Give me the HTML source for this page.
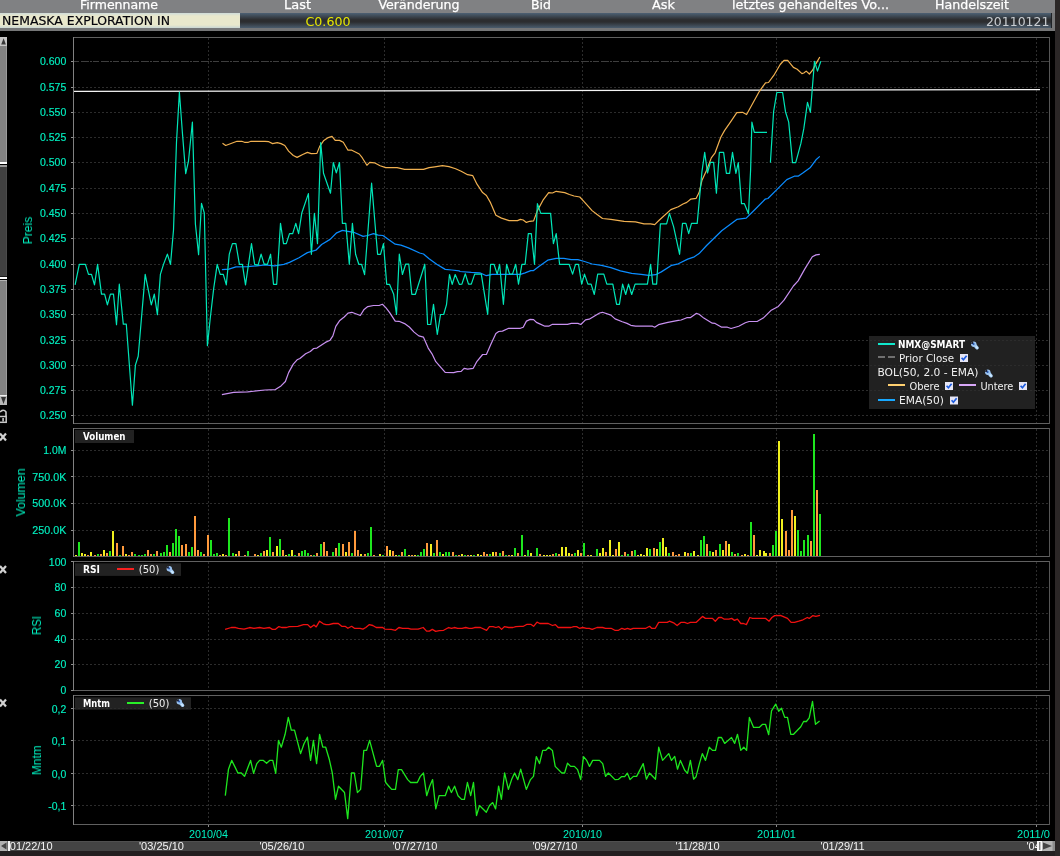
<!DOCTYPE html>
<html><head><meta charset="utf-8"><title>NEMASKA EXPLORATION IN</title>
<style>html,body{margin:0;padding:0;background:#000;overflow:hidden}svg{display:block}text{white-space:pre}</style></head><body>
<svg width="1060" height="856" viewBox="0 0 1060 856">
<defs>
<filter id="gs" x="-5%" y="-20%" width="110%" height="140%" color-interpolation-filters="sRGB"><feColorMatrix type="saturate" values="1"/></filter>
<linearGradient id="gname" x1="0" y1="0" x2="0" y2="1"><stop offset="0" stop-color="#cfdcda"/><stop offset="0.2" stop-color="#e9e8cc"/><stop offset="0.8" stop-color="#e9e8cc"/><stop offset="1" stop-color="#c9d6d4"/></linearGradient>
<linearGradient id="gdark" x1="0" y1="0" x2="0" y2="1"><stop offset="0" stop-color="#4d6174"/><stop offset="0.45" stop-color="#2c2d2f"/><stop offset="0.6" stop-color="#2c2d2f"/><stop offset="1" stop-color="#4a5c6d"/></linearGradient>
<clipPath id="cpP"><rect x="74" y="38" width="975" height="385"/></clipPath>
<clipPath id="cpAll"><rect x="0" y="0" width="1050" height="856"/></clipPath>
<clipPath id="cpHead"><rect x="0" y="0" width="1055" height="13"/></clipPath>
<g id="chk"><rect x="0" y="0" width="8" height="8" fill="#e6e6f6"/><path d="M1.6,3.8 L3.4,5.8 L6.6,1.8" fill="none" stroke="#1c5ce0" stroke-width="1.7"/></g>
<g id="wr"><path d="M4.2,4.2 L6.6,6.8" stroke="#a8d0f8" stroke-width="3.4" stroke-linecap="round" fill="none"/><circle cx="3.3" cy="3.3" r="2.7" fill="#9cc4f0"/><path d="M3.4,3.4 L0.2,2.6 L2.4,0.2 Z" fill="#1c1c2c"/><circle cx="3.1" cy="3.1" r="1.0" fill="#2858b0"/><path d="M5.6,5.8 L7,7.2" stroke="#d8f0ff" stroke-width="1.2" stroke-linecap="round"/></g>
<g id="xx"><path d="M0,1 L6,8 M6,1 L0,8" stroke="#d0d0d0" stroke-width="2.2" fill="none"/></g>
</defs>
<rect x="0" y="0" width="1060" height="856" fill="#000" />
<rect x="0" y="0" width="1055" height="13" fill="#808183" />
<g clip-path="url(#cpHead)">
<text x="80" y="8.9" font-size="12.4" fill="#ffffff" text-anchor="start" font-family="&quot;DejaVu Sans&quot;, &quot;Liberation Sans&quot;, sans-serif" font-weight="normal" textLength="78" lengthAdjust="spacingAndGlyphs" stroke="#fff" stroke-width="0.25" filter="url(#gs)">Firmenname</text>
<text x="284" y="8.9" font-size="12.4" fill="#ffffff" text-anchor="start" font-family="&quot;DejaVu Sans&quot;, &quot;Liberation Sans&quot;, sans-serif" font-weight="normal" textLength="27" lengthAdjust="spacingAndGlyphs" stroke="#fff" stroke-width="0.25" filter="url(#gs)">Last</text>
<text x="378.5" y="8.9" font-size="12.4" fill="#ffffff" text-anchor="start" font-family="&quot;DejaVu Sans&quot;, &quot;Liberation Sans&quot;, sans-serif" font-weight="normal" textLength="81" lengthAdjust="spacingAndGlyphs" stroke="#fff" stroke-width="0.25" filter="url(#gs)">Veränderung</text>
<text x="531" y="8.9" font-size="12.4" fill="#ffffff" text-anchor="start" font-family="&quot;DejaVu Sans&quot;, &quot;Liberation Sans&quot;, sans-serif" font-weight="normal" textLength="20" lengthAdjust="spacingAndGlyphs" stroke="#fff" stroke-width="0.25" filter="url(#gs)">Bid</text>
<text x="652" y="8.9" font-size="12.4" fill="#ffffff" text-anchor="start" font-family="&quot;DejaVu Sans&quot;, &quot;Liberation Sans&quot;, sans-serif" font-weight="normal" textLength="23" lengthAdjust="spacingAndGlyphs" stroke="#fff" stroke-width="0.25" filter="url(#gs)">Ask</text>
<text x="732" y="8.9" font-size="12.4" fill="#ffffff" text-anchor="start" font-family="&quot;DejaVu Sans&quot;, &quot;Liberation Sans&quot;, sans-serif" font-weight="normal" textLength="157" lengthAdjust="spacingAndGlyphs" stroke="#fff" stroke-width="0.25" filter="url(#gs)">letztes gehandeltes Vo...</text>
<text x="935" y="8.9" font-size="12.4" fill="#ffffff" text-anchor="start" font-family="&quot;DejaVu Sans&quot;, &quot;Liberation Sans&quot;, sans-serif" font-weight="normal" textLength="74" lengthAdjust="spacingAndGlyphs" stroke="#fff" stroke-width="0.25" filter="url(#gs)">Handelszeit</text>
</g>
<rect x="0" y="13" width="1055" height="18" fill="#777879" />
<rect x="0" y="13" width="240" height="15" fill="url(#gname)" />
<rect x="240" y="13" width="811" height="15" fill="url(#gdark)" />
<rect x="1051" y="13" width="1" height="15" fill="#1e2226" />
<text x="2" y="24.6" font-size="12.4" fill="#05050c" text-anchor="start" font-family="&quot;DejaVu Sans&quot;, &quot;Liberation Sans&quot;, sans-serif" font-weight="normal" textLength="168" lengthAdjust="spacingAndGlyphs" stroke="#05050c" stroke-width="0.2" filter="url(#gs)">NEMASKA EXPLORATION IN</text>
<text x="305.5" y="25.5" font-size="12.4" fill="#e6e600" text-anchor="start" font-family="&quot;DejaVu Sans&quot;, &quot;Liberation Sans&quot;, sans-serif" font-weight="normal" textLength="45" lengthAdjust="spacingAndGlyphs"  filter="url(#gs)">C0.600</text>
<text x="1049.4" y="25.6" font-size="12.4" fill="#c8ccd0" text-anchor="end" font-family="&quot;DejaVu Sans&quot;, &quot;Liberation Sans&quot;, sans-serif" font-weight="normal" textLength="63.5" lengthAdjust="spacingAndGlyphs"  filter="url(#gs)">20110121</text>
<rect x="0" y="28" width="1055" height="3" fill="#757677" />
<rect x="1055" y="0" width="5" height="856" fill="#2b2727" />
<rect x="0" y="37" width="7" height="368" fill="#828282" />
<rect x="6" y="37" width="1" height="368" fill="#9a9a9a" />
<rect x="0" y="37" width="7" height="9" fill="#c6c6c6" />
<path d="M1.2,44.6 L3.6,38.2 L5.9,44.6 Z" fill="#383838"/>
<rect x="0" y="162" width="7" height="2" fill="#ffffff" />
<rect x="0" y="164" width="7" height="1" fill="#000" />
<rect x="0" y="165" width="7" height="2" fill="#9a9a9a" />
<rect x="0" y="167" width="7" height="109" fill="#404040" />
<rect x="6" y="167" width="1" height="109" fill="#4a4a4a" />
<rect x="0" y="276" width="7" height="1" fill="#1a1a1a" />
<rect x="0" y="277" width="7" height="2" fill="#ffffff" />
<rect x="0" y="279" width="7" height="1" fill="#000" />
<rect x="0" y="280" width="7" height="1" fill="#b4b4b4" />
<rect x="0" y="395" width="7" height="1" fill="#f0f0f0" />
<rect x="0" y="396" width="7" height="9" fill="#b8b8b8" />
<path d="M1,397 L6,397 L3.5,404 Z" fill="#333"/>
<path d="M0,412 Q3.5,408.5 6,412 L6,416" fill="none" stroke="#c8c8c8" stroke-width="1.6"/>
<rect x="-1" y="416.5" width="7.2" height="5.8" fill="none" stroke="#c8c8c8" stroke-width="1.5"/>
<rect x="2.3" y="418" width="1.6" height="3.5" fill="#c8c8c8" />
<use href="#xx" x="0" y="432.5"/>
<use href="#xx" x="0" y="565"/>
<use href="#xx" x="0" y="698.5"/>
<rect x="75" y="430" width="59" height="13" fill="#222" />
<rect x="75" y="563.3" width="106" height="12.6" fill="#222" />
<rect x="75" y="697.3" width="116" height="12.4" fill="#222" />
<rect x="869" y="336" width="166" height="73" fill="#212121" />
<line x1="208.5" y1="38" x2="208.5" y2="423" stroke="#2c2c2c" stroke-width="1" stroke-dasharray="2 2" shape-rendering="crispEdges"/>
<line x1="384.5" y1="38" x2="384.5" y2="423" stroke="#2c2c2c" stroke-width="1" stroke-dasharray="2 2" shape-rendering="crispEdges"/>
<line x1="582.5" y1="38" x2="582.5" y2="423" stroke="#2c2c2c" stroke-width="1" stroke-dasharray="2 2" shape-rendering="crispEdges"/>
<line x1="776.5" y1="38" x2="776.5" y2="423" stroke="#2c2c2c" stroke-width="1" stroke-dasharray="2 2" shape-rendering="crispEdges"/>
<line x1="1036.5" y1="38" x2="1036.5" y2="423" stroke="#2c2c2c" stroke-width="1" stroke-dasharray="2 2" shape-rendering="crispEdges"/>
<line x1="208.5" y1="429" x2="208.5" y2="556" stroke="#2c2c2c" stroke-width="1" stroke-dasharray="2 2" shape-rendering="crispEdges"/>
<line x1="384.5" y1="429" x2="384.5" y2="556" stroke="#2c2c2c" stroke-width="1" stroke-dasharray="2 2" shape-rendering="crispEdges"/>
<line x1="582.5" y1="429" x2="582.5" y2="556" stroke="#2c2c2c" stroke-width="1" stroke-dasharray="2 2" shape-rendering="crispEdges"/>
<line x1="776.5" y1="429" x2="776.5" y2="556" stroke="#2c2c2c" stroke-width="1" stroke-dasharray="2 2" shape-rendering="crispEdges"/>
<line x1="1036.5" y1="429" x2="1036.5" y2="556" stroke="#2c2c2c" stroke-width="1" stroke-dasharray="2 2" shape-rendering="crispEdges"/>
<line x1="208.5" y1="562" x2="208.5" y2="690" stroke="#2c2c2c" stroke-width="1" stroke-dasharray="2 2" shape-rendering="crispEdges"/>
<line x1="384.5" y1="562" x2="384.5" y2="690" stroke="#2c2c2c" stroke-width="1" stroke-dasharray="2 2" shape-rendering="crispEdges"/>
<line x1="582.5" y1="562" x2="582.5" y2="690" stroke="#2c2c2c" stroke-width="1" stroke-dasharray="2 2" shape-rendering="crispEdges"/>
<line x1="776.5" y1="562" x2="776.5" y2="690" stroke="#2c2c2c" stroke-width="1" stroke-dasharray="2 2" shape-rendering="crispEdges"/>
<line x1="1036.5" y1="562" x2="1036.5" y2="690" stroke="#2c2c2c" stroke-width="1" stroke-dasharray="2 2" shape-rendering="crispEdges"/>
<line x1="208.5" y1="696" x2="208.5" y2="824" stroke="#2c2c2c" stroke-width="1" stroke-dasharray="2 2" shape-rendering="crispEdges"/>
<line x1="384.5" y1="696" x2="384.5" y2="824" stroke="#2c2c2c" stroke-width="1" stroke-dasharray="2 2" shape-rendering="crispEdges"/>
<line x1="582.5" y1="696" x2="582.5" y2="824" stroke="#2c2c2c" stroke-width="1" stroke-dasharray="2 2" shape-rendering="crispEdges"/>
<line x1="776.5" y1="696" x2="776.5" y2="824" stroke="#2c2c2c" stroke-width="1" stroke-dasharray="2 2" shape-rendering="crispEdges"/>
<line x1="1036.5" y1="696" x2="1036.5" y2="824" stroke="#2c2c2c" stroke-width="1" stroke-dasharray="2 2" shape-rendering="crispEdges"/>
<line x1="74" y1="87.5" x2="1049" y2="87.5" stroke="#2c2c2c" stroke-width="1" stroke-dasharray="2 2" shape-rendering="crispEdges"/>
<line x1="74" y1="112.5" x2="1049" y2="112.5" stroke="#2c2c2c" stroke-width="1" stroke-dasharray="2 2" shape-rendering="crispEdges"/>
<line x1="74" y1="137.5" x2="1049" y2="137.5" stroke="#2c2c2c" stroke-width="1" stroke-dasharray="2 2" shape-rendering="crispEdges"/>
<line x1="74" y1="162.5" x2="1049" y2="162.5" stroke="#2c2c2c" stroke-width="1" stroke-dasharray="2 2" shape-rendering="crispEdges"/>
<line x1="74" y1="188.5" x2="1049" y2="188.5" stroke="#2c2c2c" stroke-width="1" stroke-dasharray="2 2" shape-rendering="crispEdges"/>
<line x1="74" y1="213.5" x2="1049" y2="213.5" stroke="#2c2c2c" stroke-width="1" stroke-dasharray="2 2" shape-rendering="crispEdges"/>
<line x1="74" y1="238.5" x2="1049" y2="238.5" stroke="#2c2c2c" stroke-width="1" stroke-dasharray="2 2" shape-rendering="crispEdges"/>
<line x1="74" y1="264.5" x2="1049" y2="264.5" stroke="#2c2c2c" stroke-width="1" stroke-dasharray="2 2" shape-rendering="crispEdges"/>
<line x1="74" y1="289.5" x2="1049" y2="289.5" stroke="#2c2c2c" stroke-width="1" stroke-dasharray="2 2" shape-rendering="crispEdges"/>
<line x1="74" y1="314.5" x2="1049" y2="314.5" stroke="#2c2c2c" stroke-width="1" stroke-dasharray="2 2" shape-rendering="crispEdges"/>
<line x1="74" y1="340.5" x2="1049" y2="340.5" stroke="#2c2c2c" stroke-width="1" stroke-dasharray="2 2" shape-rendering="crispEdges"/>
<line x1="74" y1="365.5" x2="1049" y2="365.5" stroke="#2c2c2c" stroke-width="1" stroke-dasharray="2 2" shape-rendering="crispEdges"/>
<line x1="74" y1="390.5" x2="1049" y2="390.5" stroke="#2c2c2c" stroke-width="1" stroke-dasharray="2 2" shape-rendering="crispEdges"/>
<line x1="74" y1="415.5" x2="1049" y2="415.5" stroke="#2c2c2c" stroke-width="1" stroke-dasharray="2 2" shape-rendering="crispEdges"/>
<line x1="74" y1="61.5" x2="1049" y2="61.5" stroke="#3e3e3e" stroke-width="1" stroke-dasharray="8 1 1.5 1.5 6 2" stroke-dashoffset="13" shape-rendering="crispEdges"/>
<line x1="74" y1="450.5" x2="1049" y2="450.5" stroke="#2c2c2c" stroke-width="1" stroke-dasharray="2 2" shape-rendering="crispEdges"/>
<line x1="74" y1="476.5" x2="1049" y2="476.5" stroke="#2c2c2c" stroke-width="1" stroke-dasharray="2 2" shape-rendering="crispEdges"/>
<line x1="74" y1="503.5" x2="1049" y2="503.5" stroke="#2c2c2c" stroke-width="1" stroke-dasharray="2 2" shape-rendering="crispEdges"/>
<line x1="74" y1="530.5" x2="1049" y2="530.5" stroke="#2c2c2c" stroke-width="1" stroke-dasharray="2 2" shape-rendering="crispEdges"/>
<line x1="74" y1="587.5" x2="1049" y2="587.5" stroke="#2c2c2c" stroke-width="1" stroke-dasharray="2 2" shape-rendering="crispEdges"/>
<line x1="74" y1="613.5" x2="1049" y2="613.5" stroke="#2c2c2c" stroke-width="1" stroke-dasharray="2 2" shape-rendering="crispEdges"/>
<line x1="74" y1="639.5" x2="1049" y2="639.5" stroke="#2c2c2c" stroke-width="1" stroke-dasharray="2 2" shape-rendering="crispEdges"/>
<line x1="74" y1="664.5" x2="1049" y2="664.5" stroke="#2c2c2c" stroke-width="1" stroke-dasharray="2 2" shape-rendering="crispEdges"/>
<line x1="74" y1="708.5" x2="1049" y2="708.5" stroke="#2c2c2c" stroke-width="1" stroke-dasharray="2 2" shape-rendering="crispEdges"/>
<line x1="74" y1="740.5" x2="1049" y2="740.5" stroke="#2c2c2c" stroke-width="1" stroke-dasharray="2 2" shape-rendering="crispEdges"/>
<line x1="74" y1="773.5" x2="1049" y2="773.5" stroke="#2c2c2c" stroke-width="1" stroke-dasharray="2 2" shape-rendering="crispEdges"/>
<line x1="74" y1="805.5" x2="1049" y2="805.5" stroke="#2c2c2c" stroke-width="1" stroke-dasharray="2 2" shape-rendering="crispEdges"/>
<line x1="74" y1="91.4" x2="1040" y2="89.5" stroke="#f4f4f4" stroke-width="1.25"/>
<polyline points="221.9,394.7 233.6,392.4 247.6,391.9 265.0,390.0 275.4,389.6 281.0,385.9 285.4,381.5 288.6,372.6 293.3,364.1 297.1,359.8 299.9,358.5 305.6,353.8 310.3,351.5 313.7,348.5 316.9,348.1 325.4,342.4 330.1,340.2 332.9,335.9 335.8,326.4 339.5,320.8 344.2,317.0 348.0,313.2 351.8,312.3 360.3,315.5 364.1,309.4 367.8,306.6 373.5,305.5 379.1,305.5 382.4,304.3 385.8,307.6 389.5,312.3 395.2,321.1 399.0,321.3 404.6,323.6 409.3,327.0 414.1,332.1 418.8,335.9 423.5,337.2 428.2,348.1 432.0,353.8 435.8,361.7 445.2,372.3 453.7,372.6 457.4,371.7 461.2,371.3 464.1,368.3 467.6,369.2 473.2,368.3 477.0,361.3 482.6,354.5 486.4,354.5 491.1,343.8 495.9,333.4 498.7,331.5 502.4,331.1 508.7,328.3 520.4,328.3 523.2,327.2 526.4,321.1 530.2,319.4 533.6,319.6 536.4,322.4 539.2,323.6 544.9,326.2 548.7,326.2 552.5,324.3 567.5,324.3 571.3,323.4 577.9,323.4 580.8,324.5 585.5,319.8 589.2,319.2 599.6,313.0 602.5,312.3 610.9,315.1 615.1,318.9 622.3,321.7 627.0,323.4 630.8,325.3 635.5,326.2 652.5,326.2 654.7,327.2 658.5,324.7 667.9,322.4 678.3,320.4 681.1,320.0 686.8,317.7 690.6,317.6 696.2,313.4 699.1,314.3 703.8,318.1 712.3,323.2 715.1,323.4 721.7,327.2 727.4,327.2 731.1,328.5 738.7,326.2 745.3,322.8 749.1,321.5 757.5,321.3 763.2,318.1 770.8,310.6 778.3,306.4 784.0,300.2 793.4,286.0 798.1,280.9 804.7,269.1 812.3,256.8 816.0,254.9 819.8,254.3" fill="none" stroke="#c890f0" stroke-width="1.2" stroke-linejoin="round" />
<polyline points="222.5,143.2 225.7,145.5 237.0,141.3 241.7,141.3 244.5,142.3 248.3,142.3 251.0,141.3 265.0,141.3 268.8,141.7 272.6,143.6 277.3,142.6 281.0,143.6 284.8,145.5 288.6,151.1 293.3,155.5 297.1,157.4 302.7,154.5 307.4,152.4 311.2,153.6 316.9,153.4 319.7,146.4 323.5,140.8 328.2,137.6 332.0,136.4 335.2,140.4 339.5,140.4 343.3,142.3 348.0,150.2 351.8,150.2 359.3,154.0 362.2,157.7 366.9,165.3 369.7,162.4 374.4,162.8 380.1,165.8 385.8,167.6 397.1,167.6 404.6,169.4 423.5,169.4 429.1,167.6 434.8,166.8 442.4,165.7 449.0,166.6 455.6,168.7 461.2,171.3 467.6,174.7 472.8,175.7 477.0,184.2 482.6,192.6 486.4,195.5 490.2,202.1 495.9,215.3 501.5,218.1 509.1,220.6 517.5,220.6 520.4,219.4 523.2,220.0 526.4,222.4 529.8,221.3 533.6,220.9 537.4,210.6 543.0,200.2 548.7,192.6 552.5,193.0 556.2,191.3 564.7,192.6 569.4,194.5 574.1,196.0 579.8,197.0 584.5,202.1 592.1,210.6 596.8,214.3 602.5,218.5 610.9,219.4 624.1,221.3 635.5,221.9 644.0,223.8 650.6,223.8 654.7,224.7 659.4,220.0 670.8,209.6 678.3,206.8 683.0,204.0 686.8,202.4 690.6,199.2 696.2,198.3 699.1,192.6 701.9,180.6 706.6,170.2 711.3,157.9 715.1,152.8 720.8,137.2 724.5,130.6 731.1,121.1 736.8,112.6 742.5,112.3 746.6,114.5 752.8,103.2 759.4,91.3 765.5,82.8 768.5,82.5 774.5,74.3 780.2,64.5 784.0,60.4 787.7,60.4 793.4,67.4 797.2,69.2 801.9,73.6 803.8,73.0 806.2,71.1 809.4,74.0 812.6,70.2 816.0,63.6 819.8,57.0" fill="none" stroke="#f0b050" stroke-width="1.2" stroke-linejoin="round" />
<polyline points="221.9,269.7 228.9,269.2 235.9,266.9 247.6,266.7 256.9,265.8 265.0,264.9 274.4,265.9 283.9,264.3 289.5,262.4 299.0,257.7 307.4,252.6 315.9,250.2 321.6,244.5 330.1,239.4 336.7,232.8 342.4,230.4 348.0,231.3 353.7,232.3 363.1,236.4 367.8,235.5 373.5,233.6 378.2,235.1 382.9,235.5 395.2,244.2 400.9,245.1 408.4,247.9 419.7,253.0 423.5,254.0 429.1,258.7 436.7,264.3 445.2,269.4 451.8,270.0 459.3,270.9 460.0,271.5 471.3,272.4 479.8,272.8 486.4,275.7 492.1,274.3 520.4,274.3 525.1,272.8 530.8,270.6 533.6,270.6 539.2,266.2 547.7,260.2 556.2,258.3 563.8,258.3 571.3,259.6 577.9,259.6 584.5,261.5 592.1,264.0 601.5,265.3 610.9,267.6 620.4,270.9 631.7,273.4 641.1,274.3 648.7,275.3 655.7,274.7 661.3,271.9 671.7,265.3 678.3,263.8 687.7,259.1 694.3,256.8 699.1,253.6 706.6,245.5 721.7,230.8 736.8,219.4 746.2,218.1 755.7,208.7 765.1,199.2 767.9,198.5 778.3,188.1 786.8,179.6 794.3,176.2 798.1,176.2 802.8,173.0 810.4,167.4 816.0,159.8 819.8,156.4" fill="none" stroke="#0a8cff" stroke-width="1.25" stroke-linejoin="round" />
<polyline points="75.1,284.9 79.3,264.4 85.4,264.4 88.5,274.4 91.5,274.4 94.5,284.9 97.6,264.4 101.5,294.2 104.6,294.2 107.4,304.8 110.4,294.2 113.5,294.2 116.5,324.6 119.3,284.2 123.3,324.2 126.3,324.2 132.4,405.2 135.4,365.1 138.2,356.2 145.2,274.4 151.3,304.8 154.3,294.2 157.4,314.6 160.4,274.4 163.5,264.4 167.4,254.1 170.5,264.4 173.5,230.0 176.5,142.0 179.4,92.2 182.5,134.0 185.7,173.6 188.5,161.0 192.4,122.0 195.4,224.0 198.6,254.6 201.5,203.3 204.3,213.0 207.4,345.7 210.2,318.8 213.7,288.4 217.2,264.3 220.2,274.4 223.3,274.4 226.3,284.9 229.3,254.1 232.4,243.6 235.9,243.6 239.4,264.4 242.4,264.4 245.5,284.9 251.5,243.6 254.6,264.4 258.1,265.1 261.1,254.1 264.2,264.3 265.0,264.2 267.4,264.4 270.6,254.2 273.5,284.3 276.7,284.3 280.5,223.4 283.5,243.6 286.3,243.6 289.5,233.6 292.7,233.6 295.8,223.4 298.6,233.6 301.8,213.0 308.4,193.6 311.4,254.3 314.4,213.4 317.5,243.6 320.7,142.6 323.5,173.2 330.5,193.2 333.3,162.5 336.3,172.8 339.5,162.5 342.4,223.4 345.8,223.4 349.3,264.3 352.4,223.4 355.6,254.3 358.8,264.3 361.6,264.3 364.6,274.6 371.6,183.2 377.6,254.3 380.5,254.3 383.5,243.6 386.7,284.3 389.5,284.3 393.7,294.3 396.5,314.5 399.3,254.2 402.4,274.5 405.6,264.2 408.8,264.2 411.8,294.3 415.4,294.3 424.8,264.2 427.6,324.5 430.7,324.5 433.5,304.3 437.3,334.5 440.5,314.5 443.7,314.5 446.5,304.7 449.5,274.5 452.2,284.3 455.2,274.5 459.3,284.3 461.9,284.1 465.3,273.8 468.5,284.1 471.3,284.1 474.7,274.1 481.3,274.1 487.7,314.3 490.6,264.3 494.0,264.3 497.2,274.1 499.6,264.3 503.4,304.3 506.6,264.3 509.6,274.1 512.5,274.1 515.7,264.3 518.5,284.1 521.9,264.3 525.1,264.3 528.3,233.6 531.3,233.6 534.5,264.3 537.4,203.6 540.8,213.4 550.6,213.4 553.4,243.6 556.2,233.6 559.6,264.3 569.1,264.3 572.6,274.1 575.5,264.3 578.5,264.3 581.7,284.1 584.5,274.1 587.9,284.1 591.1,284.1 594.3,294.5 597.7,274.1 603.8,274.1 606.8,284.1 612.8,284.1 616.6,304.3 619.4,304.3 622.6,284.1 625.7,294.5 628.5,284.1 631.7,294.5 635.1,284.1 647.4,284.1 650.6,264.3 652.8,284.1 656.6,284.1 660.4,223.8 666.6,223.8 669.4,213.4 673.6,226.6 679.6,254.3 682.5,223.4 685.9,223.4 688.7,233.6 691.5,223.4 697.2,223.4 701.9,172.1 704.7,152.3 707.5,173.0 710.4,162.3 713.6,162.3 716.4,193.2 719.4,152.3 723.6,152.3 726.4,173.4 729.6,173.4 732.5,152.3 735.9,173.4 738.3,162.6 741.5,203.6 744.3,203.6 748.5,213.8 750.6,170.0 751.9,122.1 754.3,132.4 767.0,132.4" fill="none" stroke="#00e6b8" stroke-width="1.2" stroke-linejoin="round" />
<polyline points="770.4,162.6 773.6,111.7 776.8,92.5 782.6,92.5 785.5,111.7 788.7,122.1 792.5,162.6 795.7,162.6 800.9,143.4 803.8,128.7 807.5,102.3 810.4,112.3 814.5,61.3 817.5,71.1 820.8,61.3" fill="none" stroke="#00e6b8" stroke-width="1.2" stroke-linejoin="round" />
<rect x="75" y="555" width="2" height="1" fill="#f0f01e" shape-rendering="crispEdges"/>
<rect x="78" y="542" width="2" height="14" fill="#1ee61e" shape-rendering="crispEdges"/>
<rect x="81" y="553" width="2" height="3" fill="#f0f01e" shape-rendering="crispEdges"/>
<rect x="84" y="554" width="2" height="2" fill="#f0f01e" shape-rendering="crispEdges"/>
<rect x="87" y="555" width="2" height="1" fill="#ff9a3c" shape-rendering="crispEdges"/>
<rect x="90" y="552" width="2" height="4" fill="#f0f01e" shape-rendering="crispEdges"/>
<rect x="94" y="555" width="2" height="1" fill="#ff9a3c" shape-rendering="crispEdges"/>
<rect x="97" y="554" width="2" height="2" fill="#1ee61e" shape-rendering="crispEdges"/>
<rect x="100" y="554" width="2" height="2" fill="#ff9a3c" shape-rendering="crispEdges"/>
<rect x="103" y="550" width="2" height="6" fill="#f0f01e" shape-rendering="crispEdges"/>
<rect x="106" y="553" width="2" height="3" fill="#ff9a3c" shape-rendering="crispEdges"/>
<rect x="109" y="551" width="2" height="5" fill="#1ee61e" shape-rendering="crispEdges"/>
<rect x="112" y="531" width="2" height="25" fill="#f0f01e" shape-rendering="crispEdges"/>
<rect x="116" y="543" width="2" height="13" fill="#ff9a3c" shape-rendering="crispEdges"/>
<rect x="119" y="555" width="2" height="1" fill="#1ee61e" shape-rendering="crispEdges"/>
<rect x="122" y="546" width="2" height="10" fill="#ff9a3c" shape-rendering="crispEdges"/>
<rect x="125" y="554" width="2" height="2" fill="#f0f01e" shape-rendering="crispEdges"/>
<rect x="128" y="555" width="2" height="1" fill="#ff9a3c" shape-rendering="crispEdges"/>
<rect x="131" y="552" width="2" height="4" fill="#ff9a3c" shape-rendering="crispEdges"/>
<rect x="134" y="554" width="2" height="2" fill="#1ee61e" shape-rendering="crispEdges"/>
<rect x="138" y="555" width="2" height="1" fill="#1ee61e" shape-rendering="crispEdges"/>
<rect x="141" y="555" width="2" height="1" fill="#1ee61e" shape-rendering="crispEdges"/>
<rect x="144" y="554" width="2" height="2" fill="#1ee61e" shape-rendering="crispEdges"/>
<rect x="147" y="550" width="2" height="6" fill="#ff9a3c" shape-rendering="crispEdges"/>
<rect x="150" y="554" width="2" height="2" fill="#ff9a3c" shape-rendering="crispEdges"/>
<rect x="153" y="554" width="2" height="2" fill="#1ee61e" shape-rendering="crispEdges"/>
<rect x="156" y="551" width="2" height="5" fill="#ff9a3c" shape-rendering="crispEdges"/>
<rect x="160" y="553" width="2" height="3" fill="#1ee61e" shape-rendering="crispEdges"/>
<rect x="163" y="552" width="2" height="4" fill="#1ee61e" shape-rendering="crispEdges"/>
<rect x="166" y="545" width="2" height="11" fill="#1ee61e" shape-rendering="crispEdges"/>
<rect x="169" y="552" width="2" height="4" fill="#ff9a3c" shape-rendering="crispEdges"/>
<rect x="172" y="543" width="2" height="13" fill="#1ee61e" shape-rendering="crispEdges"/>
<rect x="175" y="529" width="2" height="27" fill="#1ee61e" shape-rendering="crispEdges"/>
<rect x="178" y="536" width="2" height="20" fill="#1ee61e" shape-rendering="crispEdges"/>
<rect x="181" y="545" width="2" height="11" fill="#ff9a3c" shape-rendering="crispEdges"/>
<rect x="185" y="544" width="2" height="12" fill="#ff9a3c" shape-rendering="crispEdges"/>
<rect x="188" y="552" width="2" height="4" fill="#1ee61e" shape-rendering="crispEdges"/>
<rect x="191" y="547" width="2" height="9" fill="#1ee61e" shape-rendering="crispEdges"/>
<rect x="194" y="516" width="2" height="40" fill="#ff9a3c" shape-rendering="crispEdges"/>
<rect x="197" y="550" width="2" height="6" fill="#ff9a3c" shape-rendering="crispEdges"/>
<rect x="200" y="552" width="2" height="4" fill="#1ee61e" shape-rendering="crispEdges"/>
<rect x="203" y="554" width="2" height="2" fill="#ff9a3c" shape-rendering="crispEdges"/>
<rect x="207" y="535" width="2" height="21" fill="#ff9a3c" shape-rendering="crispEdges"/>
<rect x="210" y="540" width="2" height="16" fill="#1ee61e" shape-rendering="crispEdges"/>
<rect x="213" y="554" width="2" height="2" fill="#1ee61e" shape-rendering="crispEdges"/>
<rect x="216" y="553" width="2" height="3" fill="#1ee61e" shape-rendering="crispEdges"/>
<rect x="219" y="555" width="2" height="1" fill="#ff9a3c" shape-rendering="crispEdges"/>
<rect x="222" y="554" width="2" height="2" fill="#f0f01e" shape-rendering="crispEdges"/>
<rect x="225" y="555" width="2" height="1" fill="#ff9a3c" shape-rendering="crispEdges"/>
<rect x="228" y="518" width="2" height="38" fill="#1ee61e" shape-rendering="crispEdges"/>
<rect x="232" y="553" width="2" height="3" fill="#1ee61e" shape-rendering="crispEdges"/>
<rect x="235" y="554" width="2" height="2" fill="#f0f01e" shape-rendering="crispEdges"/>
<rect x="238" y="551" width="2" height="5" fill="#ff9a3c" shape-rendering="crispEdges"/>
<rect x="244" y="555" width="2" height="1" fill="#ff9a3c" shape-rendering="crispEdges"/>
<rect x="247" y="551" width="2" height="5" fill="#1ee61e" shape-rendering="crispEdges"/>
<rect x="254" y="554" width="2" height="2" fill="#ff9a3c" shape-rendering="crispEdges"/>
<rect x="257" y="555" width="2" height="1" fill="#f0f01e" shape-rendering="crispEdges"/>
<rect x="260" y="553" width="2" height="3" fill="#1ee61e" shape-rendering="crispEdges"/>
<rect x="263" y="551" width="2" height="5" fill="#ff9a3c" shape-rendering="crispEdges"/>
<rect x="266" y="550" width="2" height="6" fill="#f0f01e" shape-rendering="crispEdges"/>
<rect x="269" y="537" width="2" height="19" fill="#1ee61e" shape-rendering="crispEdges"/>
<rect x="272" y="552" width="2" height="4" fill="#ff9a3c" shape-rendering="crispEdges"/>
<rect x="276" y="546" width="2" height="10" fill="#f0f01e" shape-rendering="crispEdges"/>
<rect x="279" y="539" width="2" height="17" fill="#1ee61e" shape-rendering="crispEdges"/>
<rect x="282" y="550" width="2" height="6" fill="#ff9a3c" shape-rendering="crispEdges"/>
<rect x="285" y="555" width="2" height="1" fill="#f0f01e" shape-rendering="crispEdges"/>
<rect x="288" y="554" width="2" height="2" fill="#1ee61e" shape-rendering="crispEdges"/>
<rect x="291" y="550" width="2" height="6" fill="#f0f01e" shape-rendering="crispEdges"/>
<rect x="294" y="555" width="2" height="1" fill="#1ee61e" shape-rendering="crispEdges"/>
<rect x="298" y="553" width="2" height="3" fill="#ff9a3c" shape-rendering="crispEdges"/>
<rect x="301" y="551" width="2" height="5" fill="#1ee61e" shape-rendering="crispEdges"/>
<rect x="304" y="550" width="2" height="6" fill="#1ee61e" shape-rendering="crispEdges"/>
<rect x="307" y="553" width="2" height="3" fill="#1ee61e" shape-rendering="crispEdges"/>
<rect x="310" y="555" width="2" height="1" fill="#ff9a3c" shape-rendering="crispEdges"/>
<rect x="313" y="555" width="2" height="1" fill="#1ee61e" shape-rendering="crispEdges"/>
<rect x="316" y="553" width="2" height="3" fill="#ff9a3c" shape-rendering="crispEdges"/>
<rect x="320" y="544" width="2" height="12" fill="#1ee61e" shape-rendering="crispEdges"/>
<rect x="323" y="542" width="2" height="14" fill="#ff9a3c" shape-rendering="crispEdges"/>
<rect x="326" y="551" width="2" height="5" fill="#ff9a3c" shape-rendering="crispEdges"/>
<rect x="332" y="552" width="2" height="4" fill="#1ee61e" shape-rendering="crispEdges"/>
<rect x="335" y="548" width="2" height="8" fill="#ff9a3c" shape-rendering="crispEdges"/>
<rect x="338" y="543" width="2" height="13" fill="#1ee61e" shape-rendering="crispEdges"/>
<rect x="342" y="544" width="2" height="12" fill="#ff9a3c" shape-rendering="crispEdges"/>
<rect x="345" y="552" width="2" height="4" fill="#f0f01e" shape-rendering="crispEdges"/>
<rect x="348" y="542" width="2" height="14" fill="#ff9a3c" shape-rendering="crispEdges"/>
<rect x="351" y="553" width="2" height="3" fill="#1ee61e" shape-rendering="crispEdges"/>
<rect x="354" y="531" width="2" height="25" fill="#ff9a3c" shape-rendering="crispEdges"/>
<rect x="357" y="550" width="2" height="6" fill="#ff9a3c" shape-rendering="crispEdges"/>
<rect x="360" y="554" width="2" height="2" fill="#f0f01e" shape-rendering="crispEdges"/>
<rect x="364" y="554" width="2" height="2" fill="#ff9a3c" shape-rendering="crispEdges"/>
<rect x="367" y="553" width="2" height="3" fill="#1ee61e" shape-rendering="crispEdges"/>
<rect x="370" y="527" width="2" height="29" fill="#1ee61e" shape-rendering="crispEdges"/>
<rect x="373" y="555" width="2" height="1" fill="#ff9a3c" shape-rendering="crispEdges"/>
<rect x="379" y="554" width="2" height="2" fill="#f0f01e" shape-rendering="crispEdges"/>
<rect x="382" y="555" width="2" height="1" fill="#1ee61e" shape-rendering="crispEdges"/>
<rect x="386" y="546" width="2" height="10" fill="#ff9a3c" shape-rendering="crispEdges"/>
<rect x="389" y="550" width="2" height="6" fill="#f0f01e" shape-rendering="crispEdges"/>
<rect x="392" y="551" width="2" height="5" fill="#ff9a3c" shape-rendering="crispEdges"/>
<rect x="395" y="555" width="2" height="1" fill="#f0f01e" shape-rendering="crispEdges"/>
<rect x="398" y="555" width="2" height="1" fill="#1ee61e" shape-rendering="crispEdges"/>
<rect x="401" y="552" width="2" height="4" fill="#ff9a3c" shape-rendering="crispEdges"/>
<rect x="404" y="549" width="2" height="7" fill="#1ee61e" shape-rendering="crispEdges"/>
<rect x="408" y="555" width="2" height="1" fill="#f0f01e" shape-rendering="crispEdges"/>
<rect x="411" y="555" width="2" height="1" fill="#ff9a3c" shape-rendering="crispEdges"/>
<rect x="414" y="555" width="2" height="1" fill="#f0f01e" shape-rendering="crispEdges"/>
<rect x="417" y="555" width="2" height="1" fill="#1ee61e" shape-rendering="crispEdges"/>
<rect x="420" y="552" width="2" height="4" fill="#1ee61e" shape-rendering="crispEdges"/>
<rect x="423" y="549" width="2" height="7" fill="#1ee61e" shape-rendering="crispEdges"/>
<rect x="426" y="543" width="2" height="13" fill="#ff9a3c" shape-rendering="crispEdges"/>
<rect x="430" y="544" width="2" height="12" fill="#f0f01e" shape-rendering="crispEdges"/>
<rect x="433" y="553" width="2" height="3" fill="#1ee61e" shape-rendering="crispEdges"/>
<rect x="436" y="540" width="2" height="16" fill="#ff9a3c" shape-rendering="crispEdges"/>
<rect x="439" y="552" width="2" height="4" fill="#1ee61e" shape-rendering="crispEdges"/>
<rect x="442" y="554" width="2" height="2" fill="#f0f01e" shape-rendering="crispEdges"/>
<rect x="445" y="552" width="2" height="4" fill="#1ee61e" shape-rendering="crispEdges"/>
<rect x="448" y="552" width="2" height="4" fill="#1ee61e" shape-rendering="crispEdges"/>
<rect x="452" y="552" width="2" height="4" fill="#ff9a3c" shape-rendering="crispEdges"/>
<rect x="455" y="555" width="2" height="1" fill="#1ee61e" shape-rendering="crispEdges"/>
<rect x="458" y="555" width="2" height="1" fill="#ff9a3c" shape-rendering="crispEdges"/>
<rect x="461" y="554" width="2" height="2" fill="#f0f01e" shape-rendering="crispEdges"/>
<rect x="464" y="555" width="2" height="1" fill="#1ee61e" shape-rendering="crispEdges"/>
<rect x="467" y="555" width="2" height="1" fill="#ff9a3c" shape-rendering="crispEdges"/>
<rect x="470" y="555" width="2" height="1" fill="#f0f01e" shape-rendering="crispEdges"/>
<rect x="473" y="555" width="2" height="1" fill="#1ee61e" shape-rendering="crispEdges"/>
<rect x="477" y="554" width="2" height="2" fill="#f0f01e" shape-rendering="crispEdges"/>
<rect x="480" y="555" width="2" height="1" fill="#f0f01e" shape-rendering="crispEdges"/>
<rect x="483" y="552" width="2" height="4" fill="#ff9a3c" shape-rendering="crispEdges"/>
<rect x="486" y="554" width="2" height="2" fill="#ff9a3c" shape-rendering="crispEdges"/>
<rect x="489" y="554" width="2" height="2" fill="#1ee61e" shape-rendering="crispEdges"/>
<rect x="492" y="552" width="2" height="4" fill="#f0f01e" shape-rendering="crispEdges"/>
<rect x="495" y="552" width="2" height="4" fill="#ff9a3c" shape-rendering="crispEdges"/>
<rect x="499" y="553" width="2" height="3" fill="#1ee61e" shape-rendering="crispEdges"/>
<rect x="502" y="551" width="2" height="5" fill="#ff9a3c" shape-rendering="crispEdges"/>
<rect x="505" y="555" width="2" height="1" fill="#1ee61e" shape-rendering="crispEdges"/>
<rect x="508" y="555" width="2" height="1" fill="#ff9a3c" shape-rendering="crispEdges"/>
<rect x="511" y="555" width="2" height="1" fill="#f0f01e" shape-rendering="crispEdges"/>
<rect x="514" y="548" width="2" height="8" fill="#1ee61e" shape-rendering="crispEdges"/>
<rect x="517" y="553" width="2" height="3" fill="#ff9a3c" shape-rendering="crispEdges"/>
<rect x="521" y="535" width="2" height="21" fill="#1ee61e" shape-rendering="crispEdges"/>
<rect x="524" y="555" width="2" height="1" fill="#f0f01e" shape-rendering="crispEdges"/>
<rect x="527" y="550" width="2" height="6" fill="#1ee61e" shape-rendering="crispEdges"/>
<rect x="530" y="553" width="2" height="3" fill="#f0f01e" shape-rendering="crispEdges"/>
<rect x="536" y="548" width="2" height="8" fill="#1ee61e" shape-rendering="crispEdges"/>
<rect x="539" y="554" width="2" height="2" fill="#ff9a3c" shape-rendering="crispEdges"/>
<rect x="543" y="555" width="2" height="1" fill="#f0f01e" shape-rendering="crispEdges"/>
<rect x="546" y="555" width="2" height="1" fill="#f0f01e" shape-rendering="crispEdges"/>
<rect x="549" y="555" width="2" height="1" fill="#f0f01e" shape-rendering="crispEdges"/>
<rect x="552" y="554" width="2" height="2" fill="#ff9a3c" shape-rendering="crispEdges"/>
<rect x="555" y="553" width="2" height="3" fill="#1ee61e" shape-rendering="crispEdges"/>
<rect x="558" y="554" width="2" height="2" fill="#ff9a3c" shape-rendering="crispEdges"/>
<rect x="561" y="547" width="2" height="9" fill="#f0f01e" shape-rendering="crispEdges"/>
<rect x="565" y="547" width="2" height="9" fill="#f0f01e" shape-rendering="crispEdges"/>
<rect x="568" y="553" width="2" height="3" fill="#f0f01e" shape-rendering="crispEdges"/>
<rect x="571" y="554" width="2" height="2" fill="#ff9a3c" shape-rendering="crispEdges"/>
<rect x="574" y="553" width="2" height="3" fill="#1ee61e" shape-rendering="crispEdges"/>
<rect x="577" y="550" width="2" height="6" fill="#f0f01e" shape-rendering="crispEdges"/>
<rect x="580" y="553" width="2" height="3" fill="#ff9a3c" shape-rendering="crispEdges"/>
<rect x="583" y="543" width="2" height="13" fill="#1ee61e" shape-rendering="crispEdges"/>
<rect x="587" y="555" width="2" height="1" fill="#ff9a3c" shape-rendering="crispEdges"/>
<rect x="590" y="555" width="2" height="1" fill="#f0f01e" shape-rendering="crispEdges"/>
<rect x="596" y="549" width="2" height="7" fill="#1ee61e" shape-rendering="crispEdges"/>
<rect x="599" y="553" width="2" height="3" fill="#f0f01e" shape-rendering="crispEdges"/>
<rect x="602" y="548" width="2" height="8" fill="#f0f01e" shape-rendering="crispEdges"/>
<rect x="605" y="552" width="2" height="4" fill="#ff9a3c" shape-rendering="crispEdges"/>
<rect x="609" y="540" width="2" height="16" fill="#f0f01e" shape-rendering="crispEdges"/>
<rect x="612" y="555" width="2" height="1" fill="#f0f01e" shape-rendering="crispEdges"/>
<rect x="615" y="549" width="2" height="7" fill="#ff9a3c" shape-rendering="crispEdges"/>
<rect x="618" y="542" width="2" height="14" fill="#f0f01e" shape-rendering="crispEdges"/>
<rect x="621" y="555" width="2" height="1" fill="#1ee61e" shape-rendering="crispEdges"/>
<rect x="624" y="552" width="2" height="4" fill="#ff9a3c" shape-rendering="crispEdges"/>
<rect x="627" y="554" width="2" height="2" fill="#1ee61e" shape-rendering="crispEdges"/>
<rect x="631" y="551" width="2" height="5" fill="#ff9a3c" shape-rendering="crispEdges"/>
<rect x="634" y="550" width="2" height="6" fill="#1ee61e" shape-rendering="crispEdges"/>
<rect x="637" y="555" width="2" height="1" fill="#f0f01e" shape-rendering="crispEdges"/>
<rect x="640" y="554" width="2" height="2" fill="#f0f01e" shape-rendering="crispEdges"/>
<rect x="643" y="555" width="2" height="1" fill="#f0f01e" shape-rendering="crispEdges"/>
<rect x="646" y="548" width="2" height="8" fill="#f0f01e" shape-rendering="crispEdges"/>
<rect x="649" y="549" width="2" height="7" fill="#1ee61e" shape-rendering="crispEdges"/>
<rect x="653" y="548" width="2" height="8" fill="#ff9a3c" shape-rendering="crispEdges"/>
<rect x="656" y="549" width="2" height="7" fill="#f0f01e" shape-rendering="crispEdges"/>
<rect x="659" y="542" width="2" height="14" fill="#1ee61e" shape-rendering="crispEdges"/>
<rect x="662" y="538" width="2" height="18" fill="#f0f01e" shape-rendering="crispEdges"/>
<rect x="665" y="547" width="2" height="9" fill="#f0f01e" shape-rendering="crispEdges"/>
<rect x="668" y="553" width="2" height="3" fill="#1ee61e" shape-rendering="crispEdges"/>
<rect x="672" y="552" width="2" height="4" fill="#ff9a3c" shape-rendering="crispEdges"/>
<rect x="675" y="555" width="2" height="1" fill="#ff9a3c" shape-rendering="crispEdges"/>
<rect x="678" y="554" width="2" height="2" fill="#ff9a3c" shape-rendering="crispEdges"/>
<rect x="684" y="552" width="2" height="4" fill="#f0f01e" shape-rendering="crispEdges"/>
<rect x="687" y="553" width="2" height="3" fill="#ff9a3c" shape-rendering="crispEdges"/>
<rect x="690" y="553" width="2" height="3" fill="#1ee61e" shape-rendering="crispEdges"/>
<rect x="693" y="551" width="2" height="5" fill="#f0f01e" shape-rendering="crispEdges"/>
<rect x="697" y="555" width="2" height="1" fill="#f0f01e" shape-rendering="crispEdges"/>
<rect x="700" y="540" width="2" height="16" fill="#1ee61e" shape-rendering="crispEdges"/>
<rect x="703" y="536" width="2" height="20" fill="#1ee61e" shape-rendering="crispEdges"/>
<rect x="706" y="544" width="2" height="12" fill="#ff9a3c" shape-rendering="crispEdges"/>
<rect x="709" y="551" width="2" height="5" fill="#1ee61e" shape-rendering="crispEdges"/>
<rect x="712" y="552" width="2" height="4" fill="#f0f01e" shape-rendering="crispEdges"/>
<rect x="715" y="550" width="2" height="6" fill="#ff9a3c" shape-rendering="crispEdges"/>
<rect x="719" y="544" width="2" height="12" fill="#1ee61e" shape-rendering="crispEdges"/>
<rect x="722" y="550" width="2" height="6" fill="#f0f01e" shape-rendering="crispEdges"/>
<rect x="725" y="541" width="2" height="15" fill="#ff9a3c" shape-rendering="crispEdges"/>
<rect x="728" y="544" width="2" height="12" fill="#f0f01e" shape-rendering="crispEdges"/>
<rect x="731" y="552" width="2" height="4" fill="#1ee61e" shape-rendering="crispEdges"/>
<rect x="734" y="554" width="2" height="2" fill="#ff9a3c" shape-rendering="crispEdges"/>
<rect x="737" y="553" width="2" height="3" fill="#1ee61e" shape-rendering="crispEdges"/>
<rect x="741" y="555" width="2" height="1" fill="#ff9a3c" shape-rendering="crispEdges"/>
<rect x="744" y="554" width="2" height="2" fill="#f0f01e" shape-rendering="crispEdges"/>
<rect x="747" y="555" width="2" height="1" fill="#ff9a3c" shape-rendering="crispEdges"/>
<rect x="750" y="522" width="2" height="34" fill="#1ee61e" shape-rendering="crispEdges"/>
<rect x="753" y="535" width="2" height="21" fill="#ff9a3c" shape-rendering="crispEdges"/>
<rect x="756" y="555" width="2" height="1" fill="#f0f01e" shape-rendering="crispEdges"/>
<rect x="759" y="550" width="2" height="6" fill="#f0f01e" shape-rendering="crispEdges"/>
<rect x="763" y="551" width="2" height="5" fill="#f0f01e" shape-rendering="crispEdges"/>
<rect x="765" y="553" width="2" height="3" fill="#f0f01e" shape-rendering="crispEdges"/>
<rect x="769" y="553" width="2" height="3" fill="#ff9a3c" shape-rendering="crispEdges"/>
<rect x="772" y="545" width="2" height="11" fill="#1ee61e" shape-rendering="crispEdges"/>
<rect x="775" y="531" width="2" height="25" fill="#1ee61e" shape-rendering="crispEdges"/>
<rect x="778" y="441" width="2" height="115" fill="#f0f01e" shape-rendering="crispEdges"/>
<rect x="781" y="519" width="2" height="37" fill="#f0f01e" shape-rendering="crispEdges"/>
<rect x="785" y="531" width="2" height="25" fill="#ff9a3c" shape-rendering="crispEdges"/>
<rect x="788" y="550" width="2" height="6" fill="#ff9a3c" shape-rendering="crispEdges"/>
<rect x="791" y="510" width="2" height="46" fill="#ff9a3c" shape-rendering="crispEdges"/>
<rect x="794" y="516" width="2" height="40" fill="#f0f01e" shape-rendering="crispEdges"/>
<rect x="797" y="530" width="2" height="26" fill="#1ee61e" shape-rendering="crispEdges"/>
<rect x="800" y="551" width="2" height="5" fill="#1ee61e" shape-rendering="crispEdges"/>
<rect x="803" y="540" width="2" height="16" fill="#1ee61e" shape-rendering="crispEdges"/>
<rect x="807" y="535" width="2" height="21" fill="#1ee61e" shape-rendering="crispEdges"/>
<rect x="810" y="541" width="2" height="15" fill="#ff9a3c" shape-rendering="crispEdges"/>
<rect x="813" y="434" width="2" height="122" fill="#1ee61e" shape-rendering="crispEdges"/>
<rect x="816" y="490" width="2" height="66" fill="#ff9a3c" shape-rendering="crispEdges"/>
<rect x="819" y="514" width="2" height="42" fill="#1ee61e" shape-rendering="crispEdges"/>
<polyline points="225.1,629.4 231.3,627.5 235.6,627.5 238.4,628.3 244.1,629.1 249.7,627.5 254.0,628.3 259.6,627.5 263.9,628.3 269.5,627.5 272.4,629.4 275.2,629.4 278.9,626.6 281.7,627.5 286.5,627.5 289.3,626.6 297.8,626.3 303.5,624.6 307.7,624.6 310.6,627.5 314.0,624.9 316.2,626.9 319.6,621.2 323.3,623.8 326.1,624.6 329.0,624.6 333.2,623.5 338.3,623.5 341.7,626.3 345.1,626.3 347.9,628.3 351.6,626.3 354.4,628.3 360.1,628.3 362.9,629.1 365.8,627.5 369.4,624.6 372.8,625.5 376.2,627.5 382.7,627.5 384.7,629.1 391.2,629.4 395.5,630.3 398.9,627.5 402.6,628.3 408.2,628.3 411.0,629.1 418.1,629.1 423.2,627.5 426.6,631.1 429.4,631.1 432.3,629.4 435.7,631.4 439.3,630.6 443.6,630.3 448.7,627.5 451.5,628.3 454.3,627.5 457.7,628.3 462.0,628.3 465.7,627.5 469.1,628.3 471.9,628.3 474.7,627.5 480.4,627.5 486.6,630.3 489.4,626.6 493.1,626.6 495.9,627.5 498.8,626.6 501.6,629.4 504.4,626.6 508.7,627.5 512.9,627.5 515.8,626.6 520.0,626.3 523.4,626.3 527.1,624.3 530.8,624.3 533.6,626.3 537.0,622.1 539.8,623.5 548.3,623.5 552.5,625.5 555.4,624.6 558.2,627.5 570.9,627.5 573.8,626.6 576.6,626.6 579.4,628.3 582.8,627.5 586.5,628.3 589.3,628.3 592.2,629.4 597.0,627.5 602.6,627.5 605.5,628.3 611.1,628.3 614.8,630.3 618.5,630.3 621.9,628.3 624.7,629.4 627.5,628.3 630.4,629.4 633.2,628.3 645.9,628.3 649.6,626.3 651.6,628.3 655.3,628.3 658.7,622.4 667.2,622.4 669.4,621.2 674.2,623.2 677.1,625.5 680.8,622.4 684.7,622.4 687.5,623.5 690.4,622.4 696.0,622.4 702.5,616.4 705.4,618.4 712.5,618.4 715.3,621.2 718.7,617.5 721.5,617.5 724.3,619.2 728.9,619.2 731.7,618.4 734.5,620.4 737.4,619.2 740.8,623.5 743.6,623.5 746.4,624.6 749.8,617.5 752.6,618.4 765.7,618.4 769.1,621.2 771.9,617.5 774.7,615.6 780.4,615.3 787.5,618.4 791.1,622.4 794.5,622.4 798.8,621.2 803.0,619.8 807.3,617.5 809.2,618.4 812.9,615.6 815.8,616.4 820.0,615.3" fill="none" stroke="#f01010" stroke-width="1.3" stroke-linejoin="round" />
<polyline points="225.3,795.7 228.5,769.2 231.7,760.4 234.7,766.4 237.9,773.0 241.3,773.0 244.5,776.4 250.6,760.4 253.6,773.4 256.8,763.6 259.6,760.4 263.4,760.4 266.6,763.2 269.6,760.4 272.8,760.4 275.7,773.4 278.5,740.4 281.3,747.2 285.1,734.3 288.3,717.4 291.3,730.2 294.5,730.2 300.6,753.6 304.0,743.8 307.4,737.2 310.6,760.4 313.4,740.4 316.6,763.6 319.6,734.3 322.8,747.2 325.7,747.2 329.4,759.8 332.3,773.0 335.5,799.4 338.5,786.2 344.5,792.5 347.7,818.7 351.5,773.0 354.3,773.0 357.4,792.5 360.6,789.4 363.8,750.4 366.6,750.4 369.6,740.4 376.6,766.4 379.4,766.4 382.6,760.4 385.7,782.5 388.9,786.2 391.7,789.4 395.5,789.4 398.3,769.6 401.5,769.6 407.7,779.6 410.6,782.5 415.0,782.5 417.3,782.5 420.3,776.4 423.5,773.0 426.7,795.7 429.7,786.2 432.6,779.6 435.8,808.9 439.1,795.7 445.2,795.7 448.6,786.2 451.4,792.5 454.6,786.2 458.0,795.7 461.6,799.4 464.4,799.4 467.4,782.5 470.7,795.7 473.5,782.5 476.5,815.5 479.5,805.5 486.3,812.3 489.5,805.5 492.7,802.6 495.6,808.9 498.6,786.2 501.4,799.4 504.6,773.0 508.4,789.4 511.6,779.6 514.6,773.0 517.8,779.6 520.7,769.2 526.3,789.4 530.5,779.6 533.5,776.4 536.3,756.6 539.5,763.6 542.7,750.4 545.8,750.4 548.6,747.2 552.4,750.4 555.2,766.4 561.8,773.0 564.6,773.0 567.5,763.2 570.7,766.4 574.4,766.4 577.6,769.6 580.7,779.6 583.5,756.6 586.7,760.4 589.5,766.4 592.7,760.4 599.5,760.4 602.7,763.6 605.6,776.4 608.4,773.0 615.0,779.6 618.3,779.4 621.7,776.6 624.7,776.6 627.4,773.2 630.0,779.6 633.4,776.4 636.6,776.4 643.2,763.6 646.4,779.2 649.4,773.0 655.5,779.2 658.7,747.2 662.6,760.4 668.7,753.6 671.5,760.4 674.7,756.4 677.5,769.2 680.4,760.4 684.7,770.2 687.5,773.4 690.4,760.4 693.6,779.2 696.0,776.8 699.4,763.6 702.3,753.6 705.5,760.4 709.2,747.2 712.5,750.4 715.5,750.4 718.3,737.5 721.5,737.5 724.7,743.4 731.5,737.5 734.7,743.4 737.5,734.3 740.8,750.4 743.8,747.2 746.6,750.4 749.4,717.4 753.6,727.4 759.2,727.4 762.6,724.3 765.5,724.3 768.7,734.7 771.5,710.8 775.7,704.1 778.7,711.3 781.5,708.3 784.7,717.4 787.5,717.4 790.8,734.3 793.6,734.3 800.8,726.8 803.6,721.5 806.4,721.5 809.2,717.9 812.5,701.3 815.5,724.3 819.6,721.1" fill="none" stroke="#1ee61e" stroke-width="1.3" stroke-linejoin="round" />
<line x1="73" y1="37.5" x2="1050" y2="37.5" stroke="#606060" stroke-width="1" shape-rendering="crispEdges"/>
<line x1="73" y1="423.5" x2="1050" y2="423.5" stroke="#606060" stroke-width="1" shape-rendering="crispEdges"/>
<line x1="1049.5" y1="37" x2="1049.5" y2="424" stroke="#565656" stroke-width="1" shape-rendering="crispEdges"/>
<line x1="73.5" y1="37" x2="73.5" y2="424" stroke="#808080" stroke-width="1" shape-rendering="crispEdges"/>
<line x1="73" y1="428.5" x2="1050" y2="428.5" stroke="#606060" stroke-width="1" shape-rendering="crispEdges"/>
<line x1="73" y1="556.5" x2="1050" y2="556.5" stroke="#606060" stroke-width="1" shape-rendering="crispEdges"/>
<line x1="1049.5" y1="428" x2="1049.5" y2="557" stroke="#565656" stroke-width="1" shape-rendering="crispEdges"/>
<line x1="73.5" y1="428" x2="73.5" y2="557" stroke="#808080" stroke-width="1" shape-rendering="crispEdges"/>
<line x1="73" y1="561.5" x2="1050" y2="561.5" stroke="#606060" stroke-width="1" shape-rendering="crispEdges"/>
<line x1="73" y1="690.5" x2="1050" y2="690.5" stroke="#606060" stroke-width="1" shape-rendering="crispEdges"/>
<line x1="1049.5" y1="561" x2="1049.5" y2="691" stroke="#565656" stroke-width="1" shape-rendering="crispEdges"/>
<line x1="73.5" y1="561" x2="73.5" y2="691" stroke="#808080" stroke-width="1" shape-rendering="crispEdges"/>
<line x1="73" y1="695.5" x2="1050" y2="695.5" stroke="#606060" stroke-width="1" shape-rendering="crispEdges"/>
<line x1="73" y1="824.5" x2="1050" y2="824.5" stroke="#606060" stroke-width="1" shape-rendering="crispEdges"/>
<line x1="1049.5" y1="695" x2="1049.5" y2="825" stroke="#565656" stroke-width="1" shape-rendering="crispEdges"/>
<line x1="73.5" y1="695" x2="73.5" y2="825" stroke="#808080" stroke-width="1" shape-rendering="crispEdges"/>
<line x1="208.5" y1="825" x2="208.5" y2="827" stroke="#8a8a8a" stroke-width="1" shape-rendering="crispEdges"/>
<line x1="384.5" y1="825" x2="384.5" y2="827" stroke="#8a8a8a" stroke-width="1" shape-rendering="crispEdges"/>
<line x1="582.5" y1="825" x2="582.5" y2="827" stroke="#8a8a8a" stroke-width="1" shape-rendering="crispEdges"/>
<line x1="776.5" y1="825" x2="776.5" y2="827" stroke="#8a8a8a" stroke-width="1" shape-rendering="crispEdges"/>
<line x1="1036.5" y1="825" x2="1036.5" y2="827" stroke="#8a8a8a" stroke-width="1" shape-rendering="crispEdges"/>
<line x1="71" y1="61.5" x2="73" y2="61.5" stroke="#909090" stroke-width="1" shape-rendering="crispEdges"/>
<text x="66.3" y="65.4" font-size="10" fill="#00f0c0" text-anchor="end" font-family="&quot;Liberation Sans&quot;, sans-serif" font-weight="normal" textLength="26.3" lengthAdjust="spacingAndGlyphs" stroke="#00f0c0" stroke-width="0.15" filter="url(#gs)">0.600</text>
<line x1="71" y1="87.5" x2="73" y2="87.5" stroke="#909090" stroke-width="1" shape-rendering="crispEdges"/>
<text x="66.3" y="91.4" font-size="10" fill="#00f0c0" text-anchor="end" font-family="&quot;Liberation Sans&quot;, sans-serif" font-weight="normal" textLength="26.3" lengthAdjust="spacingAndGlyphs" stroke="#00f0c0" stroke-width="0.15" filter="url(#gs)">0.575</text>
<line x1="71" y1="112.5" x2="73" y2="112.5" stroke="#909090" stroke-width="1" shape-rendering="crispEdges"/>
<text x="66.3" y="116.4" font-size="10" fill="#00f0c0" text-anchor="end" font-family="&quot;Liberation Sans&quot;, sans-serif" font-weight="normal" textLength="26.3" lengthAdjust="spacingAndGlyphs" stroke="#00f0c0" stroke-width="0.15" filter="url(#gs)">0.550</text>
<line x1="71" y1="137.5" x2="73" y2="137.5" stroke="#909090" stroke-width="1" shape-rendering="crispEdges"/>
<text x="66.3" y="141.4" font-size="10" fill="#00f0c0" text-anchor="end" font-family="&quot;Liberation Sans&quot;, sans-serif" font-weight="normal" textLength="26.3" lengthAdjust="spacingAndGlyphs" stroke="#00f0c0" stroke-width="0.15" filter="url(#gs)">0.525</text>
<line x1="71" y1="162.5" x2="73" y2="162.5" stroke="#909090" stroke-width="1" shape-rendering="crispEdges"/>
<text x="66.3" y="166.4" font-size="10" fill="#00f0c0" text-anchor="end" font-family="&quot;Liberation Sans&quot;, sans-serif" font-weight="normal" textLength="26.3" lengthAdjust="spacingAndGlyphs" stroke="#00f0c0" stroke-width="0.15" filter="url(#gs)">0.500</text>
<line x1="71" y1="188.5" x2="73" y2="188.5" stroke="#909090" stroke-width="1" shape-rendering="crispEdges"/>
<text x="66.3" y="192.4" font-size="10" fill="#00f0c0" text-anchor="end" font-family="&quot;Liberation Sans&quot;, sans-serif" font-weight="normal" textLength="26.3" lengthAdjust="spacingAndGlyphs" stroke="#00f0c0" stroke-width="0.15" filter="url(#gs)">0.475</text>
<line x1="71" y1="213.5" x2="73" y2="213.5" stroke="#909090" stroke-width="1" shape-rendering="crispEdges"/>
<text x="66.3" y="217.4" font-size="10" fill="#00f0c0" text-anchor="end" font-family="&quot;Liberation Sans&quot;, sans-serif" font-weight="normal" textLength="26.3" lengthAdjust="spacingAndGlyphs" stroke="#00f0c0" stroke-width="0.15" filter="url(#gs)">0.450</text>
<line x1="71" y1="238.5" x2="73" y2="238.5" stroke="#909090" stroke-width="1" shape-rendering="crispEdges"/>
<text x="66.3" y="242.4" font-size="10" fill="#00f0c0" text-anchor="end" font-family="&quot;Liberation Sans&quot;, sans-serif" font-weight="normal" textLength="26.3" lengthAdjust="spacingAndGlyphs" stroke="#00f0c0" stroke-width="0.15" filter="url(#gs)">0.425</text>
<line x1="71" y1="264.5" x2="73" y2="264.5" stroke="#909090" stroke-width="1" shape-rendering="crispEdges"/>
<text x="66.3" y="268.4" font-size="10" fill="#00f0c0" text-anchor="end" font-family="&quot;Liberation Sans&quot;, sans-serif" font-weight="normal" textLength="26.3" lengthAdjust="spacingAndGlyphs" stroke="#00f0c0" stroke-width="0.15" filter="url(#gs)">0.400</text>
<line x1="71" y1="289.5" x2="73" y2="289.5" stroke="#909090" stroke-width="1" shape-rendering="crispEdges"/>
<text x="66.3" y="293.4" font-size="10" fill="#00f0c0" text-anchor="end" font-family="&quot;Liberation Sans&quot;, sans-serif" font-weight="normal" textLength="26.3" lengthAdjust="spacingAndGlyphs" stroke="#00f0c0" stroke-width="0.15" filter="url(#gs)">0.375</text>
<line x1="71" y1="314.5" x2="73" y2="314.5" stroke="#909090" stroke-width="1" shape-rendering="crispEdges"/>
<text x="66.3" y="318.4" font-size="10" fill="#00f0c0" text-anchor="end" font-family="&quot;Liberation Sans&quot;, sans-serif" font-weight="normal" textLength="26.3" lengthAdjust="spacingAndGlyphs" stroke="#00f0c0" stroke-width="0.15" filter="url(#gs)">0.350</text>
<line x1="71" y1="340.5" x2="73" y2="340.5" stroke="#909090" stroke-width="1" shape-rendering="crispEdges"/>
<text x="66.3" y="344.4" font-size="10" fill="#00f0c0" text-anchor="end" font-family="&quot;Liberation Sans&quot;, sans-serif" font-weight="normal" textLength="26.3" lengthAdjust="spacingAndGlyphs" stroke="#00f0c0" stroke-width="0.15" filter="url(#gs)">0.325</text>
<line x1="71" y1="365.5" x2="73" y2="365.5" stroke="#909090" stroke-width="1" shape-rendering="crispEdges"/>
<text x="66.3" y="369.4" font-size="10" fill="#00f0c0" text-anchor="end" font-family="&quot;Liberation Sans&quot;, sans-serif" font-weight="normal" textLength="26.3" lengthAdjust="spacingAndGlyphs" stroke="#00f0c0" stroke-width="0.15" filter="url(#gs)">0.300</text>
<line x1="71" y1="390.5" x2="73" y2="390.5" stroke="#909090" stroke-width="1" shape-rendering="crispEdges"/>
<text x="66.3" y="394.4" font-size="10" fill="#00f0c0" text-anchor="end" font-family="&quot;Liberation Sans&quot;, sans-serif" font-weight="normal" textLength="26.3" lengthAdjust="spacingAndGlyphs" stroke="#00f0c0" stroke-width="0.15" filter="url(#gs)">0.275</text>
<line x1="71" y1="415.5" x2="73" y2="415.5" stroke="#909090" stroke-width="1" shape-rendering="crispEdges"/>
<text x="66.3" y="419.4" font-size="10" fill="#00f0c0" text-anchor="end" font-family="&quot;Liberation Sans&quot;, sans-serif" font-weight="normal" textLength="26.3" lengthAdjust="spacingAndGlyphs" stroke="#00f0c0" stroke-width="0.15" filter="url(#gs)">0.250</text>
<line x1="71" y1="450.5" x2="73" y2="450.5" stroke="#909090" stroke-width="1" shape-rendering="crispEdges"/>
<text x="66.3" y="454.4" font-size="10" fill="#00f0c0" text-anchor="end" font-family="&quot;Liberation Sans&quot;, sans-serif" font-weight="normal" textLength="23" lengthAdjust="spacingAndGlyphs" stroke="#00f0c0" stroke-width="0.15" filter="url(#gs)">1.0M</text>
<line x1="71" y1="476.5" x2="73" y2="476.5" stroke="#909090" stroke-width="1" shape-rendering="crispEdges"/>
<text x="66.3" y="481.4" font-size="10" fill="#00f0c0" text-anchor="end" font-family="&quot;Liberation Sans&quot;, sans-serif" font-weight="normal" textLength="34" lengthAdjust="spacingAndGlyphs" stroke="#00f0c0" stroke-width="0.15" filter="url(#gs)">750.0K</text>
<line x1="71" y1="503.5" x2="73" y2="503.5" stroke="#909090" stroke-width="1" shape-rendering="crispEdges"/>
<text x="66.3" y="507.4" font-size="10" fill="#00f0c0" text-anchor="end" font-family="&quot;Liberation Sans&quot;, sans-serif" font-weight="normal" textLength="34" lengthAdjust="spacingAndGlyphs" stroke="#00f0c0" stroke-width="0.15" filter="url(#gs)">500.0K</text>
<line x1="71" y1="530.5" x2="73" y2="530.5" stroke="#909090" stroke-width="1" shape-rendering="crispEdges"/>
<text x="66.3" y="534.4" font-size="10" fill="#00f0c0" text-anchor="end" font-family="&quot;Liberation Sans&quot;, sans-serif" font-weight="normal" textLength="34" lengthAdjust="spacingAndGlyphs" stroke="#00f0c0" stroke-width="0.15" filter="url(#gs)">250.0K</text>
<line x1="71" y1="561.5" x2="73" y2="561.5" stroke="#909090" stroke-width="1" shape-rendering="crispEdges"/>
<text x="66.3" y="566.4" font-size="10" fill="#00f0c0" text-anchor="end" font-family="&quot;Liberation Sans&quot;, sans-serif" font-weight="normal" textLength="17.5" lengthAdjust="spacingAndGlyphs" stroke="#00f0c0" stroke-width="0.15" filter="url(#gs)">100</text>
<line x1="71" y1="587.5" x2="73" y2="587.5" stroke="#909090" stroke-width="1" shape-rendering="crispEdges"/>
<text x="66.3" y="591.0" font-size="10" fill="#00f0c0" text-anchor="end" font-family="&quot;Liberation Sans&quot;, sans-serif" font-weight="normal" textLength="11.7" lengthAdjust="spacingAndGlyphs" stroke="#00f0c0" stroke-width="0.15" filter="url(#gs)">80</text>
<line x1="71" y1="613.5" x2="73" y2="613.5" stroke="#909090" stroke-width="1" shape-rendering="crispEdges"/>
<text x="66.3" y="617.0" font-size="10" fill="#00f0c0" text-anchor="end" font-family="&quot;Liberation Sans&quot;, sans-serif" font-weight="normal" textLength="11.7" lengthAdjust="spacingAndGlyphs" stroke="#00f0c0" stroke-width="0.15" filter="url(#gs)">60</text>
<line x1="71" y1="639.5" x2="73" y2="639.5" stroke="#909090" stroke-width="1" shape-rendering="crispEdges"/>
<text x="66.3" y="643.0" font-size="10" fill="#00f0c0" text-anchor="end" font-family="&quot;Liberation Sans&quot;, sans-serif" font-weight="normal" textLength="11.7" lengthAdjust="spacingAndGlyphs" stroke="#00f0c0" stroke-width="0.15" filter="url(#gs)">40</text>
<line x1="71" y1="664.5" x2="73" y2="664.5" stroke="#909090" stroke-width="1" shape-rendering="crispEdges"/>
<text x="66.3" y="668.4" font-size="10" fill="#00f0c0" text-anchor="end" font-family="&quot;Liberation Sans&quot;, sans-serif" font-weight="normal" textLength="11.7" lengthAdjust="spacingAndGlyphs" stroke="#00f0c0" stroke-width="0.15" filter="url(#gs)">20</text>
<line x1="71" y1="690.5" x2="73" y2="690.5" stroke="#909090" stroke-width="1" shape-rendering="crispEdges"/>
<text x="66.3" y="694.1" font-size="10" fill="#00f0c0" text-anchor="end" font-family="&quot;Liberation Sans&quot;, sans-serif" font-weight="normal" textLength="5.8" lengthAdjust="spacingAndGlyphs" stroke="#00f0c0" stroke-width="0.15" filter="url(#gs)">0</text>
<line x1="71" y1="708.5" x2="73" y2="708.5" stroke="#909090" stroke-width="1" shape-rendering="crispEdges"/>
<text x="66.3" y="712.9" font-size="10" fill="#00f0c0" text-anchor="end" font-family="&quot;Liberation Sans&quot;, sans-serif" font-weight="normal" textLength="14.5" lengthAdjust="spacingAndGlyphs" stroke="#00f0c0" stroke-width="0.15" filter="url(#gs)">0,2</text>
<line x1="71" y1="740.5" x2="73" y2="740.5" stroke="#909090" stroke-width="1" shape-rendering="crispEdges"/>
<text x="66.3" y="744.9" font-size="10" fill="#00f0c0" text-anchor="end" font-family="&quot;Liberation Sans&quot;, sans-serif" font-weight="normal" textLength="14.5" lengthAdjust="spacingAndGlyphs" stroke="#00f0c0" stroke-width="0.15" filter="url(#gs)">0,1</text>
<line x1="71" y1="773.5" x2="73" y2="773.5" stroke="#909090" stroke-width="1" shape-rendering="crispEdges"/>
<text x="66.3" y="777.9" font-size="10" fill="#00f0c0" text-anchor="end" font-family="&quot;Liberation Sans&quot;, sans-serif" font-weight="normal" textLength="14.5" lengthAdjust="spacingAndGlyphs" stroke="#00f0c0" stroke-width="0.15" filter="url(#gs)">0,0</text>
<line x1="71" y1="805.5" x2="73" y2="805.5" stroke="#909090" stroke-width="1" shape-rendering="crispEdges"/>
<text x="66.3" y="809.9" font-size="10" fill="#00f0c0" text-anchor="end" font-family="&quot;Liberation Sans&quot;, sans-serif" font-weight="normal" textLength="18" lengthAdjust="spacingAndGlyphs" stroke="#00f0c0" stroke-width="0.15" filter="url(#gs)">-0,1</text>
<text x="0" y="0" font-size="12" fill="#00f0c0" text-anchor="middle" font-family="&quot;Liberation Sans&quot;, sans-serif" font-weight="normal" textLength="27.5" lengthAdjust="spacingAndGlyphs" transform="translate(32,230.5) rotate(-90)" filter="url(#gs)">Preis</text>
<text x="0" y="0" font-size="12" fill="#00f0c0" text-anchor="middle" font-family="&quot;Liberation Sans&quot;, sans-serif" font-weight="normal" textLength="48" lengthAdjust="spacingAndGlyphs" transform="translate(25,492.5) rotate(-90)" filter="url(#gs)">Volumen</text>
<text x="0" y="0" font-size="12" fill="#00f0c0" text-anchor="middle" font-family="&quot;Liberation Sans&quot;, sans-serif" font-weight="normal" textLength="19" lengthAdjust="spacingAndGlyphs" transform="translate(41,625.5) rotate(-90)" filter="url(#gs)">RSI</text>
<text x="0" y="0" font-size="12" fill="#00f0c0" text-anchor="middle" font-family="&quot;Liberation Sans&quot;, sans-serif" font-weight="normal" textLength="29.5" lengthAdjust="spacingAndGlyphs" transform="translate(41,760.3) rotate(-90)" filter="url(#gs)">Mntm</text>
<g clip-path="url(#cpAll)">
<text x="208.5" y="838" font-size="10" fill="#00f0c0" text-anchor="middle" font-family="&quot;Liberation Sans&quot;, sans-serif" font-weight="normal" textLength="39" lengthAdjust="spacingAndGlyphs"  filter="url(#gs)">2010/04</text>
<text x="384.5" y="838" font-size="10" fill="#00f0c0" text-anchor="middle" font-family="&quot;Liberation Sans&quot;, sans-serif" font-weight="normal" textLength="39" lengthAdjust="spacingAndGlyphs"  filter="url(#gs)">2010/07</text>
<text x="582.5" y="838" font-size="10" fill="#00f0c0" text-anchor="middle" font-family="&quot;Liberation Sans&quot;, sans-serif" font-weight="normal" textLength="39" lengthAdjust="spacingAndGlyphs"  filter="url(#gs)">2010/10</text>
<text x="776.5" y="838" font-size="10" fill="#00f0c0" text-anchor="middle" font-family="&quot;Liberation Sans&quot;, sans-serif" font-weight="normal" textLength="39" lengthAdjust="spacingAndGlyphs"  filter="url(#gs)">2011/01</text>
<text x="1017" y="838" font-size="10" fill="#00f0c0" text-anchor="start" font-family="&quot;Liberation Sans&quot;, sans-serif" font-weight="normal" textLength="39" lengthAdjust="spacingAndGlyphs"  filter="url(#gs)">2011/04</text>
</g>
<text x="83" y="440" font-size="9.8" fill="#fff" text-anchor="start" font-family="&quot;DejaVu Sans&quot;, &quot;Liberation Sans&quot;, sans-serif" font-weight="bold" textLength="42.5" lengthAdjust="spacingAndGlyphs"  filter="url(#gs)">Volumen</text>
<text x="83" y="573" font-size="9.8" fill="#fff" text-anchor="start" font-family="&quot;DejaVu Sans&quot;, &quot;Liberation Sans&quot;, sans-serif" font-weight="bold" textLength="17" lengthAdjust="spacingAndGlyphs"  filter="url(#gs)">RSI</text>
<rect x="117" y="568" width="17" height="2" fill="#f82020" />
<text x="138.8" y="573.2" font-size="10.5" fill="#f0f0f0" text-anchor="start" font-family="&quot;DejaVu Sans&quot;, &quot;Liberation Sans&quot;, sans-serif" font-weight="normal" textLength="20.6" lengthAdjust="spacingAndGlyphs"  filter="url(#gs)">(50)</text>
<use href="#wr" x="166" y="565.5"/>
<text x="83" y="706.8" font-size="9.8" fill="#fff" text-anchor="start" font-family="&quot;DejaVu Sans&quot;, &quot;Liberation Sans&quot;, sans-serif" font-weight="bold" textLength="27" lengthAdjust="spacingAndGlyphs"  filter="url(#gs)">Mntm</text>
<rect x="127" y="702" width="17" height="2" fill="#28f028" />
<text x="148.8" y="706.9" font-size="10.5" fill="#f0f0f0" text-anchor="start" font-family="&quot;DejaVu Sans&quot;, &quot;Liberation Sans&quot;, sans-serif" font-weight="normal" textLength="20.6" lengthAdjust="spacingAndGlyphs"  filter="url(#gs)">(50)</text>
<use href="#wr" x="176" y="698.5"/>
<rect x="878" y="343" width="17" height="2" fill="#10e8cc" />
<text x="898" y="348" font-size="9.8" fill="#fff" text-anchor="start" font-family="&quot;DejaVu Sans&quot;, &quot;Liberation Sans&quot;, sans-serif" font-weight="bold" textLength="67" lengthAdjust="spacingAndGlyphs"  filter="url(#gs)">NMX@SMART</text>
<use href="#wr" x="970.5" y="341"/>
<rect x="878" y="356" width="7" height="2" fill="#707070" />
<rect x="888" y="356" width="7" height="2" fill="#707070" />
<text x="899" y="361.5" font-size="10" fill="#f0f0f0" text-anchor="start" font-family="&quot;DejaVu Sans&quot;, &quot;Liberation Sans&quot;, sans-serif" font-weight="normal" textLength="55" lengthAdjust="spacingAndGlyphs"  filter="url(#gs)">Prior Close</text>
<use href="#chk" x="960" y="354"/>
<text x="877.4" y="376.4" font-size="10" fill="#f0f0f0" text-anchor="start" font-family="&quot;DejaVu Sans&quot;, &quot;Liberation Sans&quot;, sans-serif" font-weight="normal" textLength="101" lengthAdjust="spacingAndGlyphs"  filter="url(#gs)">BOL(50, 2.0 - EMA)</text>
<use href="#wr" x="984.5" y="369"/>
<rect x="888" y="384" width="17" height="2" fill="#ffd070" />
<text x="909.5" y="389.5" font-size="10" fill="#f0f0f0" text-anchor="start" font-family="&quot;DejaVu Sans&quot;, &quot;Liberation Sans&quot;, sans-serif" font-weight="normal" textLength="30" lengthAdjust="spacingAndGlyphs"  filter="url(#gs)">Obere</text>
<use href="#chk" x="945" y="382"/>
<rect x="959" y="384" width="17" height="2" fill="#d8a8f8" />
<text x="980.4" y="389.5" font-size="10" fill="#f0f0f0" text-anchor="start" font-family="&quot;DejaVu Sans&quot;, &quot;Liberation Sans&quot;, sans-serif" font-weight="normal" textLength="33" lengthAdjust="spacingAndGlyphs"  filter="url(#gs)">Untere</text>
<use href="#chk" x="1019" y="382"/>
<rect x="878" y="399" width="17" height="2" fill="#18a8ff" />
<text x="899" y="404.3" font-size="10" fill="#f0f0f0" text-anchor="start" font-family="&quot;DejaVu Sans&quot;, &quot;Liberation Sans&quot;, sans-serif" font-weight="normal" textLength="45" lengthAdjust="spacingAndGlyphs"  filter="url(#gs)">EMA(50)</text>
<use href="#chk" x="950" y="396.5"/>
<rect x="0" y="841" width="1055" height="10" fill="#444" />
<rect x="0" y="841" width="1055" height="1" fill="#505050" />
<rect x="0" y="851" width="1055" height="5" fill="#231f20" />
<rect x="0" y="841" width="7.4" height="10" fill="#b0b0b0" />
<path d="M6.5,842.5 L1,846 L6.5,849.5 Z" fill="#444"/>
<rect x="1042" y="841" width="13" height="10" fill="#b4b4b4" />
<rect x="1052.5" y="841" width="2.5" height="10" fill="#8c8c8c" />
<path d="M1043,842.5 L1052,846 L1043,849.5 Z" fill="#444"/>
<clipPath id="cpS"><rect x="0" y="841" width="1040" height="10"/></clipPath><g clip-path="url(#cpS)">
<text x="7.700000000000001" y="850" font-size="11" fill="#f4f4f4" text-anchor="start" font-family="&quot;Liberation Sans&quot;, sans-serif" font-weight="normal"  filter="url(#gs)">'01/22/10</text>
<text x="139.0" y="850" font-size="11" fill="#f4f4f4" text-anchor="start" font-family="&quot;Liberation Sans&quot;, sans-serif" font-weight="normal"  filter="url(#gs)">'03/25/10</text>
<text x="259.4" y="850" font-size="11" fill="#f4f4f4" text-anchor="start" font-family="&quot;Liberation Sans&quot;, sans-serif" font-weight="normal"  filter="url(#gs)">'05/26/10</text>
<text x="392.4" y="850" font-size="11" fill="#f4f4f4" text-anchor="start" font-family="&quot;Liberation Sans&quot;, sans-serif" font-weight="normal"  filter="url(#gs)">'07/27/10</text>
<text x="532.4" y="850" font-size="11" fill="#f4f4f4" text-anchor="start" font-family="&quot;Liberation Sans&quot;, sans-serif" font-weight="normal"  filter="url(#gs)">'09/27/10</text>
<text x="675.4" y="850" font-size="11" fill="#f4f4f4" text-anchor="start" font-family="&quot;Liberation Sans&quot;, sans-serif" font-weight="normal"  filter="url(#gs)">'11/28/10</text>
<text x="820.4" y="850" font-size="11" fill="#f4f4f4" text-anchor="start" font-family="&quot;Liberation Sans&quot;, sans-serif" font-weight="normal"  filter="url(#gs)">'01/29/11</text>
<text x="1026.4" y="850" font-size="11" fill="#f4f4f4" text-anchor="start" font-family="&quot;Liberation Sans&quot;, sans-serif" font-weight="normal"  filter="url(#gs)">'04/01/11</text>
</g>
<rect x="8" y="841" width="2.2" height="10" fill="#f4f4f4" />
<rect x="1037" y="841" width="5" height="10" fill="#f8f8f8" />
<rect x="1039.3" y="842" width="1" height="8" fill="#505050" />
</svg></body></html>
